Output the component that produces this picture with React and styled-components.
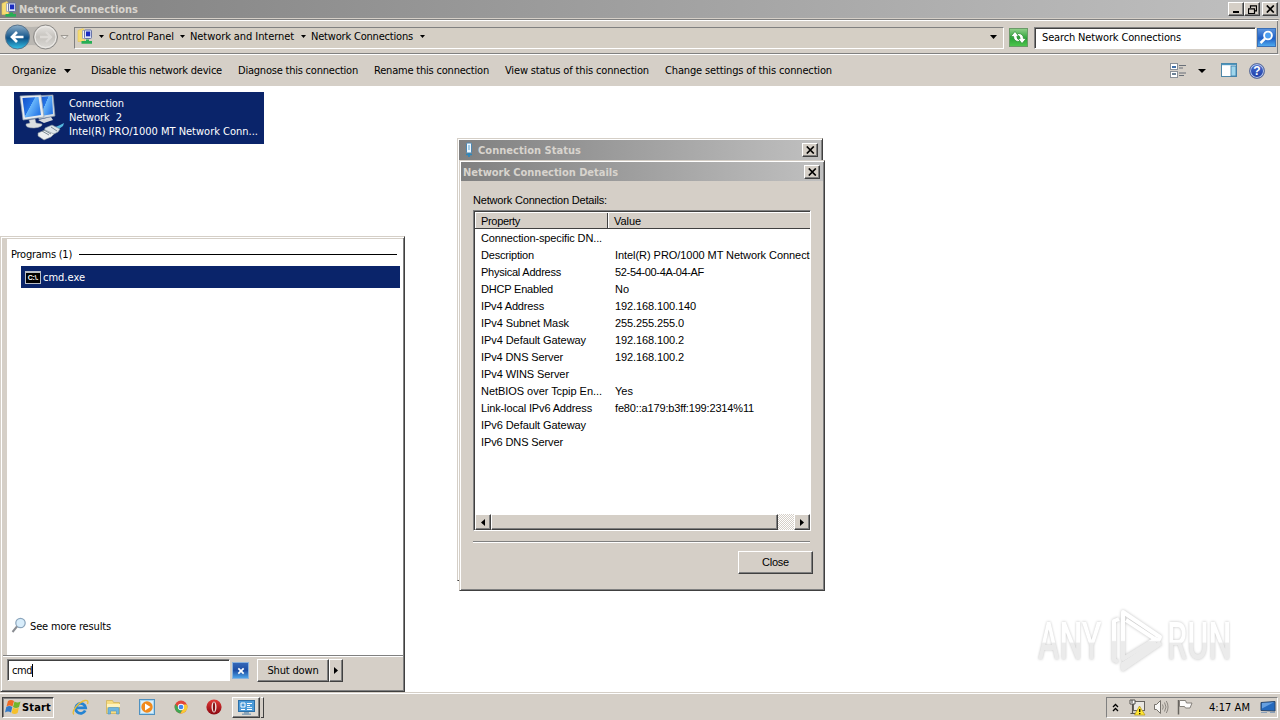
import React, { useLayoutEffect, useRef, useState } from "react";
import styled, { createGlobalStyle, css } from "styled-components";

const face = "#d5cfc7";
const navy = "#0a246a";
const tahoma = '"DejaVu Sans Condensed", "DejaVu Sans", sans-serif';
const msSans = '"Liberation Sans", Arial, sans-serif';

const Global = createGlobalStyle`
  * { box-sizing: border-box; }
  html, body { margin: 0; padding: 0; background: #fff; overflow: hidden; }
  svg { display: block; flex: none; }
`;

const raised = css`
  background: ${face};
  border: 1px solid;
  border-color: #fff #404040 #404040 #fff;
  box-shadow: inset -1px -1px 0 #808080;
`;
const sunken = css`
  border: 1px solid;
  border-color: #808080 #fff #fff #808080;
`;

/* ---------- text ---------- */

const Glyphs = styled.span`
  display: inline-block;
  white-space: pre;
  flex: none;
  font-family: ${(p) => (p.$sans ? msSans : tahoma)};
  font-stretch: ${(p) => (p.$sans ? "normal" : "condensed")};
  font-size: ${(p) => p.$size || 11}px;
  font-weight: ${(p) => (p.$bold ? 700 : 400)};
  line-height: 14px;
  margin-top: ${(p) => (p.$drop || 0) * 2}px;
  color: ${(p) => p.$color || "#000"};
`;

/* Spreads or tightens the letters so that the label fills a given width. */
function Label({ w, children, sans, bold, color, size, drop }) {
  const ref = useRef(null);
  const [spacing, setSpacing] = useState(0);
  useLayoutEffect(() => {
    const natural = ref.current.getBoundingClientRect().width;
    setSpacing((w - natural) / children.length);
  }, []);
  return (
    <Glyphs ref={ref} $sans={sans} $bold={bold} $color={color} $size={size} $drop={drop} style={{ letterSpacing: spacing }}>
      {children}
    </Glyphs>
  );
}

const Slot = styled.div`
  width: ${(p) => p.$w}px;
  flex: none;
  display: flex;
  align-items: center;
`;

const Caret = ({ w = 7, h = 4 }) => (
  <svg width={w} height={h} viewBox="0 0 8 4" preserveAspectRatio="none"><path d="M0 0h8L4 4z" fill="#000" /></svg>
);

/* ---------- desktop frame ---------- */

const Desktop = styled.div`
  position: relative;
  width: 1280px;
  height: 720px;
  display: flex;
  flex-direction: column;
  overflow: hidden;
  background: #fff;
`;

const TitleBar = styled.div`
  height: ${(p) => p.$h || 18}px;
  flex: none;
  display: flex;
  align-items: center;
  padding: ${(p) => p.$pad || "0 2px 0 1px"};
  background: linear-gradient(90deg, #808080, #c0c0c0);
`;
const Grow = styled.div`flex: 1;`;

const CaptionButton = styled.div`
  ${raised}
  width: ${(p) => p.$w || 16}px;
  height: 14px;
  flex: none;
  display: flex;
  align-items: center;
  justify-content: center;
  margin-left: ${(p) => p.$gap || 0}px;
`;
const Cross = () => (
  <svg width="9" height="8" viewBox="0 0 9 8"><path d="M.8 .5l7 7M7.8 .5l-7 7" stroke="#000" strokeWidth="1.7" /></svg>
);

const Rebar = styled.div`
  height: 36px;
  flex: none;
  margin-top: 1px;
  border-top: 1px solid #808080;
  border-bottom: 1px solid #fff;
  border-right: 2px solid ${face};
  box-shadow: inset 0 1px 0 #fff, inset 0 -1px 0 #808080, inset -1px 0 0 #808080;
  display: flex;
  align-items: center;
  padding-left: 4px;
`;
const AddressBox = styled.div`
  ${sunken}
  width: 930px;
  height: 22px;
  margin-top: 1px;
  display: flex;
  align-items: center;
  padding: 0 0 2px 2px;
  background: #d5cfc5;
`;
const SearchBox = styled.div`
  ${sunken}
  width: 222px;
  height: 22px;
  margin: 1px 1px 0 6px;
  padding: 0 0 0 7px;
  display: flex;
  align-items: center;
  background: #fff;
  box-shadow: inset 1px 1px 0 #404040;
`;
const SquareIcon = styled.div`
  width: ${(p) => p.$size || 19}px;
  height: ${(p) => p.$size || 19}px;
  margin-left: ${(p) => p.$gap || 0}px;
  margin-top: ${(p) => p.$top || 0}px;
  flex: none;
  display: flex;
  align-items: center;
  justify-content: center;
  border: 1px solid ${(p) => p.$edge};
  background: ${(p) => p.$fill};
`;
const CommandBar = styled.div`
  height: 31px;
  flex: none;
  display: flex;
  align-items: center;
  padding-left: 12px;
  background: ${face};
`;
const Chrome = styled.div`
  background: ${face};
  flex: none;
`;
const FolderView = styled.div`
  flex: 1;
  padding: 6px 14px;
`;
const Adapter = styled.div`
  width: 250px;
  height: 52px;
  background: ${navy};
  display: flex;
  align-items: center;
  padding: 0 0 2px 2px;
`;
const AdapterText = styled.div`
  display: flex;
  flex-direction: column;
  align-items: flex-start;
  margin: 2px 0 0 4px;
`;

/* ---------- icons ---------- */

const NetFolder = () => (
  <svg width="17" height="17" viewBox="0 0 17 17">
    <path d="M1 2.500l5-2 1.500 2v11H1z" fill="#f5dc72" stroke="#e6c655" strokeWidth=".6" />
    <path d="M5.500 2.500h6v8h-6z" fill="#f3f4f8" stroke="#9aa1b4" strokeWidth=".8" />
    <rect x="7.500" y="2" width="7" height="8.500" rx="1" fill="#dfe5f4" stroke="#5d6a9e" strokeWidth=".9" />
    <rect x="9" y="3.500" width="4.200" height="4.800" fill="#1b2cc0" />
    <path d="M9 11.500h3v1.500h3v2.800H4.500V13H9z" fill="#27ae55" />
  </svg>
);

const BackForward = () => (
  <svg width="66" height="28" viewBox="0 0 66 28">
    <defs>
      <linearGradient id="back" x1="0" y1="0" x2="0" y2="1">
        <stop offset="0" stopColor="#8fb0ca" />
        <stop offset=".42" stopColor="#2c6797" />
        <stop offset=".55" stopColor="#0f5288" />
        <stop offset="1" stopColor="#35c3e8" />
      </linearGradient>
      <linearGradient id="fwd" x1="0" y1="0" x2="0" y2="1">
        <stop offset="0" stopColor="#e8e6e3" />
        <stop offset=".5" stopColor="#c5c2bd" />
        <stop offset="1" stopColor="#dedcd8" />
      </linearGradient>
    </defs>
    <path d="M14 2q13 4 28 0v22q-15-4-28 0z" fill="#bab7b2" />
    <circle cx="13.500" cy="14" r="12" fill="url(#back)" stroke="#58738b" />
    <path d="M13 9l-5 5 5 5M8.500 14H19.500" fill="none" stroke="#fff" strokeWidth="2.700" />
    <circle cx="41.500" cy="14" r="12" fill="url(#fwd)" stroke="#8b8986" />
    <circle cx="41.500" cy="14" r="10.500" fill="none" stroke="#efedea" />
    <path d="M42 9l5 5-5 5M46 14h-10" fill="none" stroke="#dddad6" strokeWidth="2.300" />
    <path d="M57 12.500h7l-3.500 3.500z" fill="#efede9" stroke="#8c8882" strokeWidth=".8" />
  </svg>
);

const AdapterIcon = () => (
  <svg width="49" height="48" viewBox="0 0 49 48">
    <defs>
      <linearGradient id="scr" x1="0" y1="0" x2="1" y2=".6">
        <stop offset="0" stopColor="#1650c8" />
        <stop offset=".5" stopColor="#2474e6" />
        <stop offset=".52" stopColor="#69b6fa" />
        <stop offset="1" stopColor="#2c7ce8" />
      </linearGradient>
    </defs>
    <path d="M19 3l18-1 2 21-16 3z" fill="#d5dde4" stroke="#8798a8" strokeWidth=".7" />
    <path d="M23 4l13-1 1 18-12 2z" fill="url(#scr)" />
    <path d="M22 27l13-3 2 3-9 3z" fill="#d6d9dc" />
    <path d="M4 3l21-1 3 22-21 3z" fill="#e7ebef" stroke="#91a0ae" strokeWidth=".7" />
    <path d="M6.500 5l16-1 2.500 18-16 2.500z" fill="url(#scr)" />
    <path d="M13 27l6-1 1 4 6 1q1 3-8 4-9 0-8-4l4-1z" fill="#dcdfe1" stroke="#9ca5ac" strokeWidth=".5" />
    <path d="M32 36q7-1 16-6l-1 3q-6 5-13 6z" fill="#54b7dd" />
    <path d="M29 35l7-3 8 4-2 3-8 4-6-3z" fill="#dde5e9" stroke="#7f929d" strokeWidth=".6" />
    <path d="M22 40l7-3 9 4-3 3-7 3-6-4z" fill="#eceff0" stroke="#7f8f98" strokeWidth=".6" />
    <path d="M26 38l7 4M28 37l7 4M35 34l6 4" stroke="#6f8089" strokeWidth=".9" />
  </svg>
);

const Refresh = () => (
  <svg width="17" height="17" viewBox="0 0 17 17">
    <path d="M.8 7.500L5 2.500l4 5H6.800q.2 3 3 3.500L9 12.500Q3.800 12.500 3.500 7.500z" fill="#fff" stroke="#168020" strokeWidth=".6" />
    <path d="M16.200 9.500L12 14.500l-4-5h2.200q-.2-3-3-3.500L8 4.500q5.200 0 5.500 5z" fill="#fff" stroke="#168020" strokeWidth=".6" />
  </svg>
);
const Magnifier = () => (
  <svg width="15" height="15" viewBox="0 0 15 15">
    <circle cx="9" cy="5.500" r="3.900" fill="#4e9ff0" stroke="#fff" strokeWidth="1.900" />
    <path d="M6 8.700L1.500 13" stroke="#fff" strokeWidth="2.500" />
  </svg>
);
const ViewsIcon = () => (
  <svg width="17" height="16" viewBox="0 0 17 16">
    <rect x=".5" y=".5" width="7" height="6" fill="#fff" stroke="#8a9098" />
    <rect x="2" y="3" width="4" height="2" fill="#3f6fa8" />
    <rect x=".5" y="8.500" width="7" height="6" fill="#fff" stroke="#8a9098" />
    <rect x="2" y="10" width="4" height="2" fill="#6d8296" />
    <path d="M9 2.500h7M9 5h4M9 10h7M9 12.500h5" stroke="#696f78" />
  </svg>
);
const PaneIcon = () => (
  <svg width="17" height="15" viewBox="0 0 17 15">
    <rect x=".5" y=".5" width="15" height="13" fill="#fff" stroke="#4c86a8" />
    <path d="M1 1.500h14" stroke="#4c96bf" strokeWidth="1.400" />
    <rect x="10" y="3" width="5" height="10" fill="#9fd6ec" stroke="#3a7ca8" strokeWidth=".8" />
  </svg>
);
const HelpRing = styled.div`
  width: 16px;
  height: 16px;
  border-radius: 50%;
  border: 1px solid #5e6f9c;
  box-shadow: inset 0 0 0 1px #b7c6e8;
  background: linear-gradient(#4a6fd0, #1c3ca6);
  color: #fff;
  font: bold 12px/14px "Liberation Sans", sans-serif;
  text-align: center;
`;

/* ---------- dialogs ---------- */

const Dialog = styled.div`
  position: absolute;
  left: ${(p) => p.$x}px;
  top: ${(p) => p.$y}px;
  width: 366px;
  height: ${(p) => p.$h}px;
  padding: 1px;
  background: ${face};
  border: 1px solid;
  border-color: ${face} #404040 #404040 ${face};
  box-shadow: inset 1px 1px 0 #fff, inset -1px -1px 0 #808080;
  display: flex;
  flex-direction: column;
`;
const DialogBody = styled.div`
  padding: 12px 10px 0 12px;
  display: flex;
  flex-direction: column;
  align-items: flex-start;
`;
const ListBox = styled.div`
  width: 338px;
  height: 321px;
  margin-top: 3px;
  border: 1px solid;
  border-color: #808080 #fff #fff #808080;
  box-shadow: inset 1px 1px 0 #404040;
  padding: 1px 0 0 1px;
  background: #fff;
  display: flex;
  flex-direction: column;
  overflow: hidden;
`;
const ListHeader = styled.div`
  display: flex;
  height: 17px;
  flex: none;
  background: ${face};
  border-top: 1px solid #fff;
  border-bottom: 1px solid #404040;
`;
const HeaderCell = styled.div`
  width: ${(p) => p.$w}px;
  border-left: 1px solid #fff;
  border-right: ${(p) => (p.$last ? "0" : "1px solid #404040")};
  padding: 1px 0 0 5px;
  display: flex;
  align-items: center;
`;
const Row = styled.div`
  display: flex;
  align-items: center;
  height: 17px;
  flex: none;
  padding-left: 6px;
`;
const ScrollBar = styled.div`
  display: flex;
  height: 16px;
  flex: none;
  margin-right: 1px;
  background: repeating-conic-gradient(#fff 0 25%, ${face} 0 50%) 0 0 / 2px 2px;
`;
const ScrollPart = styled.div`
  ${raised}
  width: ${(p) => p.$w}px;
  flex: none;
  margin-left: ${(p) => p.$gap || 0}px;
  display: flex;
  align-items: center;
  justify-content: center;
`;
const Etched = styled.div`
  width: 337px;
  height: 2px;
  margin-top: 10px;
  background: linear-gradient(#808080 50%, #fff 50%);
`;
const PushButton = styled.div`
  ${raised}
  width: ${(p) => p.$w}px;
  height: ${(p) => p.$h}px;
  display: flex;
  align-items: center;
  justify-content: center;
  margin: ${(p) => p.$m || 0};
`;

const details = [
  ["Connection-specific DN...", 121],
  ["Description", 53, "Intel(R) PRO/1000 MT Network Connecti", 197],
  ["Physical Address", 80, "52-54-00-4A-04-AF", 89],
  ["DHCP Enabled", 72, "No", 14],
  ["IPv4 Address", 63, "192.168.100.140", 81],
  ["IPv4 Subnet Mask", 88, "255.255.255.0", 69],
  ["IPv4 Default Gateway", 105, "192.168.100.2", 69],
  ["IPv4 DNS Server", 82, "192.168.100.2", 69],
  ["IPv4 WINS Server", 88],
  ["NetBIOS over Tcpip En...", 121, "Yes", 18],
  ["Link-local IPv6 Address", 111, "fe80::a179:b3ff:199:2314%11", 139],
  ["IPv6 Default Gateway", 105],
  ["IPv6 DNS Server", 82],
];

/* ---------- start menu ---------- */

const StartMenu = styled.div`
  position: absolute;
  left: 0;
  top: 236px;
  width: 405px;
  height: 456px;
  background: ${face};
  border: 1px solid;
  border-color: ${face} #404040 #404040 ${face};
  box-shadow: inset 1px 1px 0 #fff, inset -1px -1px 0 #808080;
  padding: 2px 1px 1px 6px;
  display: flex;
  flex-direction: column;
`;
const Results = styled.div`
  height: 416px;
  background: #fff;
  display: flex;
  flex-direction: column;
  padding: 8px 3px 0 4px;
`;
const GroupHeading = styled.div`
  display: flex;
  align-items: center;
  height: 15px;
`;
const Rule = styled.div`
  flex: 1;
  height: 1px;
  background: #000;
  margin: 0 3px 0 7px;
`;
const ResultRow = styled.div`
  height: 22px;
  margin: 4px 0 0 10px;
  padding-left: 4px;
  background: ${navy};
  display: flex;
  align-items: center;
  gap: 2px;
`;
const MoreRow = styled.div`
  display: flex;
  align-items: center;
  gap: 3px;
  padding-bottom: 21px;
`;
const MenuFooter = styled.div`
  flex: 1;
  margin-left: -4px;
  padding: 3px 0 0 4px;
  border-top: 1px solid #808080;
  box-shadow: inset 0 1px 0 #fff;
  display: flex;
  align-items: flex-start;
`;
const QueryBox = styled.div`
  ${sunken}
  width: 223px;
  height: 22px;
  padding-left: 4px;
  background: #fff;
  box-shadow: inset 1px 1px 0 #404040;
  display: flex;
  align-items: center;
`;
const TextCursor = styled.div`
  width: 1px;
  height: 13px;
  margin-top: 1px;
  background: #000;
`;
const ConsoleIcon = styled.div`
  width: 16px;
  height: 13px;
  border: 1px solid #b9bec6;
  border-top-width: 2px;
  background: #000;
  color: #fff;
  font: bold 7px/9px "Liberation Sans", sans-serif;
  letter-spacing: -0.2px;
  text-align: center;
`;

/* ---------- taskbar ---------- */

const Taskbar = styled.div`
  height: 28px;
  flex: none;
  border-top: 1px solid ${face};
  box-shadow: inset 0 1px 0 #fff;
  background: ${face};
  display: flex;
  align-items: center;
  padding: 1px 2px 0 2px;
`;
const StartButton = styled.div`
  width: 52px;
  height: 21px;
  border: 1px solid;
  border-color: #404040 #fff #fff #404040;
  box-shadow: inset 1px 1px 0 #808080;
  display: flex;
  align-items: center;
  padding-left: 2px;
`;
const TaskIcon = styled.div`
  width: ${(p) => p.$w || 34}px;
  display: flex;
  justify-content: center;
`;
const TaskGroup = styled.div`
  display: flex;
  gap: 1px;
  margin-left: 1px;
`;
const TaskButton = styled.div`
  ${raised}
  width: 28px;
  height: 21px;
  background: #dedad3;
  display: flex;
  align-items: center;
  justify-content: center;
`;
const StackEdge = styled.div`
  width: 3px;
  height: 21px;
  border-top: 1px solid #fff;
  border-right: 1px solid #404040;
  border-bottom: 1px solid #404040;
`;
const Tray = styled.div`
  ${sunken}
  width: 172px;
  height: 21px;
  display: flex;
  align-items: center;
  padding-left: 5px;
`;

const WinFlag = () => (
  <svg width="17" height="16" viewBox="0 0 17 16">
    <path d="M3 2q3-2 6 0L7.500 7.500q-3-2-6 0z" fill="#ee6a24" />
    <path d="M9.500 2.500q3 2 6 0L14 8q-3 2-6 0z" fill="#72b52c" />
    <path d="M1.300 8q3-2 6 0L6 13.500q-3-2-6 0z" fill="#3279c8" />
    <path d="M7.900 8.600q3 2 6 0L12.600 14q-3 2-6 0z" fill="#f5c02b" />
  </svg>
);
const IEIcon = () => (
  <svg width="17" height="17" viewBox="0 0 17 17">
    <path d="M13.200 11.500A5 5 0 1 1 13.600 8.800H5" fill="none" stroke="#2584d2" strokeWidth="2.800" />
    <path d="M1.800 15.500C-1 12 7 3 13 1.500q4-.5 2.500 3.500" fill="none" stroke="#e7bd37" strokeWidth="1.300" />
  </svg>
);
const FolderIcon = () => (
  <svg width="17" height="16" viewBox="0 0 17 16">
    <path d="M1.500 1.500h6l1 2h6v11h-13z" fill="#f7dc80" stroke="#d1b25a" strokeWidth=".8" />
    <path d="M2 5h13v3H2z" fill="#fff3bd" />
    <path d="M3 15V9.500q0-1 1-1h9q1 0 1 1V15h-2.500v-3h-6v3z" fill="#6fb6df" stroke="#4b94c3" strokeWidth=".6" />
  </svg>
);
const MediaIcon = () => (
  <svg width="16" height="16" viewBox="0 0 16 16">
    <rect x=".5" y=".5" width="15" height="15" fill="#a8d7f3" stroke="#4f91c0" />
    <rect x="2" y="2" width="12" height="12" fill="#dceff9" />
    <circle cx="8" cy="8" r="5.700" fill="#f18a1c" />
    <path d="M6 4.500l5.500 3.500L6 11.500z" fill="#fff" />
  </svg>
);
const ChromeIcon = () => (
  <svg width="14" height="14" viewBox="0 0 16 16">
    <circle cx="8" cy="8" r="7.300" fill="#e2453a" />
    <path d="M1.500 4.700A7.300 7.300 0 0 0 7.200 15.300L10.500 9.500 8 8 5 8.500z" fill="#40a653" />
    <path d="M14.700 5A7.300 7.300 0 0 1 7.200 15.300L11 9.500V5z" fill="#f8cb35" />
    <circle cx="8" cy="8" r="3.600" fill="#fff" />
    <circle cx="8" cy="8" r="2.700" fill="#4387ed" />
  </svg>
);
const OperaIcon = () => (
  <svg width="16" height="16" viewBox="0 0 16 16">
    <defs><linearGradient id="op" x1="0" y1="0" x2="0" y2="1"><stop offset="0" stopColor="#e33b38" /><stop offset="1" stopColor="#8a0710" /></linearGradient></defs>
    <circle cx="8" cy="8" r="7.600" fill="url(#op)" />
    <ellipse cx="8" cy="8" rx="2.500" ry="5.500" fill="#f1e6e3" />
    <ellipse cx="8" cy="8" rx="1.100" ry="4.700" fill="#851015" />
  </svg>
);
const PanelIcon = () => (
  <svg width="17" height="15" viewBox="0 0 17 15">
    <rect x=".5" y=".5" width="16" height="11" fill="#4b9bd9" stroke="#2d6fa6" />
    <path d="M3 3h4v4H3z" fill="none" stroke="#fff" />
    <path d="M9 3.500h5M9 5.500h3M3 9.500h4M9 9.500h5" stroke="#fff" />
    <path d="M9 7.500h5" stroke="#d9edf8" />
    <path d="M6 12h5v1.500h2V15H4v-1.500h2z" fill="#8aa4b8" />
  </svg>
);
const Chevrons = () => (
  <svg width="7" height="9" viewBox="0 0 7 9"><path d="M1 4l2.500-2.500L6 4M1 8l2.500-2.500L6 8" fill="none" stroke="#000" strokeWidth="1.300" /></svg>
);
const NetTray = () => (
  <svg width="17" height="17" viewBox="0 0 17 17">
    <rect x="4.500" y="2.500" width="11" height="9" fill="#e9e7e2" stroke="#66635f" />
    <path d="M1 1h5v4H1z" fill="#fff" stroke="#55524e" />
    <path d="M3 1v3M3.500 5v9.500M1.500 14.500h6" fill="none" stroke="#55524e" strokeWidth="1.100" />
    <path d="M10.500 7l5.500 9H5.500z" fill="#ffe633" stroke="#b4951a" strokeWidth=".7" />
    <path d="M10.700 10v3M10.700 14v1.200" stroke="#221c00" strokeWidth="1.400" />
  </svg>
);
const Speaker = () => (
  <svg width="17" height="16" viewBox="0 0 17 16">
    <path d="M1.500 5.500h2l4-4v13l-4-4h-2z" fill="#f8f7f5" stroke="#75716b" />
    <path d="M9.500 5.500q1.500 2.500 0 5M11.500 3.500q3 4.500 0 9M13.300 2q3.500 6 0 12" fill="none" stroke="#827e78" strokeWidth=".9" />
  </svg>
);
const Flag = () => (
  <svg width="16" height="16" viewBox="0 0 16 16">
    <path d="M1.500 1v14.500" stroke="#68645f" strokeWidth="1.500" />
    <path d="M2.500 1.500h6l1 2.500h5.500l-2 5H8.500l-1-1.500h-5z" fill="#fdfcfb" stroke="#7a7670" strokeWidth=".9" />
  </svg>
);
const ShowDesktop = () => (
  <svg width="16" height="13" viewBox="0 0 16 13">
    <path d="M1 1.500l14-1v9.500L1 9.500z" fill="#2469bd" stroke="#29476c" />
    <path d="M2 2l12-.7L2 7.500z" fill="#659fe0" />
    <path d="M1 11.500h6M10 11.500h5" stroke="#8aa0b8" />
  </svg>
);
const SearchMore = () => (
  <svg width="16" height="17" viewBox="0 0 16 17">
    <circle cx="9.500" cy="6" r="4.700" fill="#d8edfb" stroke="#8ba5bc" strokeWidth="1.200" />
    <path d="M6 9.500L1.500 15" stroke="#8a8d92" strokeWidth="2" />
  </svg>
);
const AdapterSmall = () => (
  <svg width="10" height="16" viewBox="0 0 10 16">
    <rect x="2.500" y="1" width="5" height="10" rx="1" fill="#eef8ff" stroke="#4d87b2" />
    <rect x="4" y="3" width="2" height="5" fill="#a5cfe9" />
    <path d="M5 11v4M2 12.500h6" stroke="#2b87bd" strokeWidth="1.600" />
  </svg>
);

/* ---------- watermark ---------- */

const Watermark = styled.div`
  position: absolute;
  left: 1038px;
  top: 608px;
  width: 196px;
  height: 66px;
  display: flex;
  align-items: center;
`;
const BrandBox = styled.div`
  width: ${(p) => p.$w}px;
  height: 66px;
  display: flex;
  align-items: center;
`;
const BrandText = styled.span`
  font: 500 52px/66px Roboto, sans-serif;
  margin-top: 2px;
  transform-origin: 0 50%;
  transform: scaleX(${(p) => p.$sx});
  color: #efefef;
  background: linear-gradient(#fff 50%, #ebebeb 52%);
  background-clip: text;
  -webkit-text-fill-color: transparent;
  filter: drop-shadow(0 0 1.5px #c4c4c4);
`;
const PlayMark = () => (
  <svg width="61" height="66" viewBox="0 0 61 66" style={{ overflow: "visible" }}>
    <defs>
      <linearGradient id="mark" gradientUnits="userSpaceOnUse" x1="0" y1="0" x2="0" y2="66">
        <stop offset=".49" stopColor="#fff" />
        <stop offset=".51" stopColor="#ebebeb" />
      </linearGradient>
    </defs>
    <g fill="none" stroke="url(#mark)" strokeLinejoin="round" strokeWidth="4" filter="drop-shadow(0 0 1.5px #c0c0c0)">
      <path d="M17 27V4L54 29 52 33 20 12" />
      <path d="M17 20V51L51 30" />
      <path d="M13 11L8 13V52L12 54" />
      <path d="M55 35L17 61V56L50 34" />
    </g>
  </svg>
);

export default function App() {
  return (
    <Desktop>
      <Global />
      <Chrome>
        <TitleBar>
          <Slot $w={18}><NetFolder /></Slot>
          <Label w={119} bold drop={1} color="#d8d4ce">Network Connections</Label>
          <Grow />
          <CaptionButton $w={16}><svg width="8" height="8"><path d="M1 6h6v2H1z" /></svg></CaptionButton>
          <CaptionButton $w={16}>
            <svg width="9" height="9" viewBox="0 0 9 9"><path d="M2.500 3V.8h6v5H6.500M.5 3.800h6v4.700h-6z" fill="none" stroke="#000" strokeWidth="1.200" /></svg>
          </CaptionButton>
          <CaptionButton $gap={2}><Cross /></CaptionButton>
        </TitleBar>
        <Rebar>
          <Slot $w={70}><BackForward /></Slot>
          <AddressBox>
            <Slot $w={22}><NetFolder /></Slot>
            <Slot $w={10}><Caret w={5} h={3} /></Slot>
            <Slot $w={71}><Label w={65}>Control Panel</Label></Slot>
            <Slot $w={10}><Caret w={5} h={3} /></Slot>
            <Slot $w={111}><Label w={104}>Network and Internet</Label></Slot>
            <Slot $w={10}><Caret w={5} h={3} /></Slot>
            <Slot $w={109}><Label w={102}>Network Connections</Label></Slot>
            <Slot $w={570}><Caret w={5} h={3} /></Slot>
            <Caret w={7} />
          </AddressBox>
          <SquareIcon $gap={5} $edge="#6a9a68" $fill="linear-gradient(#8fce88, #2ba438 55%, #4cc54c)"><Refresh /></SquareIcon>
          <SearchBox><Label w={139}>Search Network Connections</Label></SearchBox>
          <SquareIcon $edge="#3b6fb5" $fill="linear-gradient(#5a93dd, #1f5fc6 55%, #4ea9ee)"><Magnifier /></SquareIcon>
        </Rebar>
        <CommandBar>
          <Slot $w={52}><Label w={44}>Organize</Label></Slot>
          <Slot $w={27}><Caret w={7} /></Slot>
          <Slot $w={147}><Label w={131}>Disable this network device</Label></Slot>
          <Slot $w={136}><Label w={120}>Diagnose this connection</Label></Slot>
          <Slot $w={131}><Label w={115}>Rename this connection</Label></Slot>
          <Slot $w={160}><Label w={144}>View status of this connection</Label></Slot>
          <Slot $w={505}><Label w={167}>Change settings of this connection</Label></Slot>
          <Slot $w={28}><ViewsIcon /></Slot>
          <Slot $w={23}><Caret w={8} /></Slot>
          <Slot $w={28}><PaneIcon /></Slot>
          <HelpRing>?</HelpRing>
        </CommandBar>
      </Chrome>

      <FolderView>
        <Adapter>
          <AdapterIcon />
          <AdapterText>
            <Label w={55} color="#fff">Connection</Label>
            <Label w={53} color="#fff">{"Network  2"}</Label>
            <Label w={189} color="#fff">Intel(R) PRO/1000 MT Network Conn...</Label>
          </AdapterText>
        </Adapter>
      </FolderView>

      <Taskbar>
        <StartButton>
          <WinFlag />
          <Label w={29} bold drop={1}>Start</Label>
        </StartButton>
        <Slot $w={9} />
        <TaskIcon><IEIcon /></TaskIcon>
        <TaskIcon $w={33}><FolderIcon /></TaskIcon>
        <TaskIcon><MediaIcon /></TaskIcon>
        <TaskIcon $w={33}><ChromeIcon /></TaskIcon>
        <TaskIcon><OperaIcon /></TaskIcon>
        <TaskGroup>
          <TaskButton><PanelIcon /></TaskButton>
          <StackEdge />
        </TaskGroup>
        <Grow />
        <Tray>
          <Slot $w={17}><Chevrons /></Slot>
          <Slot $w={24}><NetTray /></Slot>
          <Slot $w={24}><Speaker /></Slot>
          <Slot $w={32}><Flag /></Slot>
          <Slot $w={51}><Label w={41} drop={1}>4:17 AM</Label></Slot>
          <ShowDesktop />
        </Tray>
      </Taskbar>

      <StartMenu>
        <Results>
          <GroupHeading><Label w={61}>Programs (1)</Label><Rule /></GroupHeading>
          <ResultRow><ConsoleIcon>C:\.</ConsoleIcon><Label w={42} color="#fff" drop={1}>cmd.exe</Label></ResultRow>
          <Grow />
          <MoreRow><SearchMore /><Label w={81} drop={1}>See more results</Label></MoreRow>
        </Results>
        <MenuFooter>
          <QueryBox><Label w={20} drop={1}>cmd</Label><TextCursor /></QueryBox>
          <SquareIcon $size={17} $top={3} $gap={2} $edge="#8ab2dd" $fill="linear-gradient(#3467b8, #1d4ea4 50%, #4fa4e8)">
            <svg width="8" height="8" viewBox="0 0 9 9"><path d="M1.500 1.500l6 6M7.500 1.500l-6 6" stroke="#fff" strokeWidth="1.900" /></svg>
          </SquareIcon>
          <PushButton $w={72} $h={23} $m="0 0 0 8px"><Label w={51}>Shut down</Label></PushButton>
          <PushButton $w={14} $h={23}><svg width="4" height="7" viewBox="0 0 4 7"><path d="M0 0l4 3.500L0 7z" /></svg></PushButton>
        </MenuFooter>
      </StartMenu>

      <Dialog $x={457} $y={138} $h={443}>
        <TitleBar $pad="0 3px 0 5px" $h={20}>
          <Slot $w={14}><AdapterSmall /></Slot>
          <Label w={103} bold drop={1} color="#d8d4ce">Connection Status</Label>
          <Grow />
          <CaptionButton><Cross /></CaptionButton>
        </TitleBar>
      </Dialog>

      <Dialog $x={459} $y={160} $h={431}>
        <TitleBar $pad="0 3px 0 2px" $h={19}>
          <Label w={155} bold drop={1} color="#d8d4ce">Network Connection Details</Label>
          <Grow />
          <CaptionButton><Cross /></CaptionButton>
        </TitleBar>
        <DialogBody>
          <Label w={134} sans>Network Connection Details:</Label>
          <ListBox>
            <ListHeader>
              <HeaderCell $w={133}><Label sans w={39}>Property</Label></HeaderCell>
              <HeaderCell $w={202} $last><Label sans w={27}>Value</Label></HeaderCell>
            </ListHeader>
            {details.map(([name, nameW, value, valueW]) => (
              <Row key={name}>
                <Slot $w={134}><Label sans w={nameW}>{name}</Label></Slot>
                {value && <Label sans w={valueW}>{value}</Label>}
              </Row>
            ))}
            <Grow />
            <ScrollBar>
              <ScrollPart $w={16}><svg width="4" height="7" viewBox="0 0 4 7"><path d="M4 0L0 3.500 4 7z" /></svg></ScrollPart>
              <ScrollPart $w={287} />
              <ScrollPart $w={16} $gap={16}><svg width="4" height="7" viewBox="0 0 4 7"><path d="M0 0l4 3.500L0 7z" /></svg></ScrollPart>
            </ScrollBar>
          </ListBox>
          <Etched />
          <PushButton $w={75} $h={23} $m="8px 0 0 265px"><Label sans w={27} drop={-1}>Close</Label></PushButton>
        </DialogBody>
      </Dialog>

      <Watermark>
        <BrandBox $w={68}><BrandText $sx={0.62}>ANY</BrandText></BrandBox>
        <BrandBox $w={61}><PlayMark /></BrandBox>
        <BrandBox $w={66}><BrandText $sx={0.62}>RUN</BrandText></BrandBox>
      </Watermark>
    </Desktop>
  );
}
